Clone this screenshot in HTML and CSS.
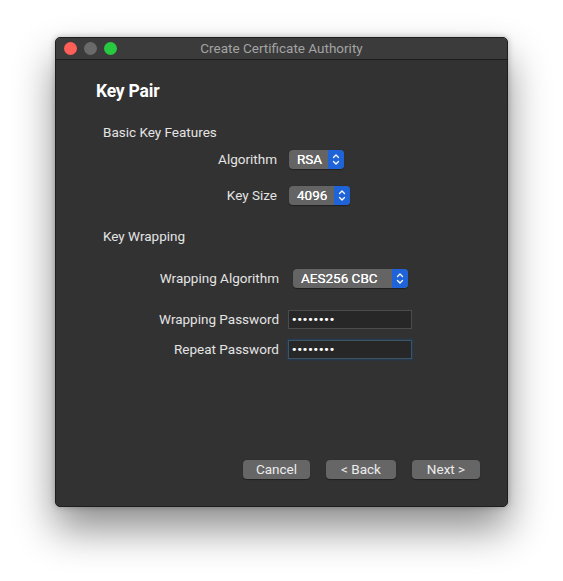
FILE: index.html
```html
<!DOCTYPE html>
<html>
<head>
<meta charset="utf-8">
<link rel="stylesheet" href="styles.css">
</head>
<body>
<div class="window">
  <div class="titlebar">
    <div class="lights">
      <span class="light red"></span>
      <span class="light gray"></span>
      <span class="light green"></span>
    </div>
    <div class="title">Create Certificate Authority</div>
  </div>
  <div class="content">
    <h1 class="heading">Key Pair</h1>
    <div class="section">Basic Key Features</div>
    <div class="row row-alg">
      <div class="label w-basic">Algorithm</div>
      <div class="popup p-rsa"><span class="ptext">RSA</span><span class="stepper"><svg width="16" height="19" viewBox="0 0 16 19"><path d="M5.5 7.5 L8 5 L10.5 7.5 M5.5 11.5 L8 14 L10.5 11.5" fill="none" stroke="#fff" stroke-width="1.3" stroke-linecap="round" stroke-linejoin="round"/></svg></span></div>
    </div>
    <div class="row row-size">
      <div class="label w-basic">Key Size</div>
      <div class="popup p-size"><span class="ptext">4096</span><span class="stepper"><svg width="16" height="19" viewBox="0 0 16 19"><path d="M5.5 7.5 L8 5 L10.5 7.5 M5.5 11.5 L8 14 L10.5 11.5" fill="none" stroke="#fff" stroke-width="1.3" stroke-linecap="round" stroke-linejoin="round"/></svg></span></div>
    </div>
    <div class="section sec2">Key Wrapping</div>
    <div class="row row-walg">
      <div class="label w-wrap">Wrapping Algorithm</div>
      <div class="popup p-aes"><span class="ptext">AES256 CBC</span><span class="stepper"><svg width="16" height="19" viewBox="0 0 16 19"><path d="M5.5 7.5 L8 5 L10.5 7.5 M5.5 11.5 L8 14 L10.5 11.5" fill="none" stroke="#fff" stroke-width="1.3" stroke-linecap="round" stroke-linejoin="round"/></svg></span></div>
    </div>
    <div class="row row-pw">
      <div class="label w-wrap">Wrapping Password</div>
      <div class="field">••••••••</div>
    </div>
    <div class="row row-rpw">
      <div class="label w-wrap">Repeat Password</div>
      <div class="field focused">••••••••</div>
    </div>
    <div class="spacer"></div>
    <div class="buttons">
      <div class="btn b-cancel">Cancel</div>
      <div class="btn b-back">&lt; Back</div>
      <div class="btn b-next">Next &gt;</div>
    </div>
  </div>
</div>
</body>
</html>
```
FILE: styles.css
```css
html, body {
  margin: 0;
  padding: 0;
  background: #ffffff;
}
body {
  width: 563px;
  height: 581px;
  overflow: hidden;
  font-family: Roboto, "Liberation Sans", sans-serif;
  font-size: 13.5px;
}
.window {
  margin: 37px 0 0 55px;
  width: 453px;
  height: 470px;
  box-sizing: border-box;
  background: #323232;
  border-radius: 5px;
  border: 1px solid #1e1e1e;
  box-shadow: 0 22px 40px rgba(0,0,0,0.45), 0 0 6px rgba(0,0,0,0.25);
  display: flex;
  flex-direction: column;
  overflow: hidden;
}
.titlebar {
  height: 21px;
  flex: none;
  background: #3b3b3b;
  border-bottom: 1px solid #1b1b1b;
  border-top: 1px solid #5a5a5a;
  border-radius: 5px 5px 0 0;
  display: flex;
  align-items: center;
  position: relative;
  box-sizing: content-box;
  margin-top: -1px;
}
.lights {
  display: flex;
  gap: 7px;
  padding-left: 7.5px;
}
.light {
  width: 13px;
  height: 13px;
  border-radius: 50%;
  display: block;
}
.red { background: #fe5f57; }
.gray { background: #6a6a6a; }
.green { background: #28c840; }
.title {
  position: absolute;
  left: 0;
  right: 0;
  text-align: center;
  color: #a3a3a3;
  font-size: 13.5px;
  line-height: 21px;
}
.content {
  flex: 1;
  display: flex;
  flex-direction: column;
  padding: 21px 27px 27px 40px;
  color: #e4e4e4;
}
.heading {
  margin: 0;
  font-size: 17.5px;
  font-weight: 700;
  line-height: 20px;
  color: #ffffff;
  letter-spacing: -0.2px;
}
.section {
  margin-top: 23px;
  margin-left: 7px;
  line-height: 16px;
  color: #e4e4e4;
}
.sec2 { margin-top: 23px; }
.row {
  display: flex;
  align-items: center;
  height: 20px;
}
.row-alg { margin-top: 9px; }
.row-size { margin-top: 16px; }
.row-walg { margin-top: 24px; }
.row-pw { margin-top: 21px; }
.row-rpw { margin-top: 10px; }
.label {
  text-align: right;
  color: #e4e4e4;
  flex: none;
}
.w-basic { width: 181px; margin-right: 12px; }
.w-wrap { width: 183px; }
.row-walg .label { margin-right: 14px; }
.row-pw .label, .row-rpw .label { margin-right: 9px; }
.popup {
  height: 19px;
  display: flex;
  align-items: stretch;
  background: #646464;
  border-radius: 4px;
  box-shadow: 0 0.5px 1px rgba(0,0,0,0.4);
  overflow: hidden;
}
.ptext {
  flex: 1;
  padding-left: 8px;
  line-height: 19px;
  color: #ffffff;
  font-weight: 400;
  text-shadow: 0 0 0.4px #fff;
}
.stepper {
  width: 16px;
  background: #1f63d8;
  display: flex;
}
.p-rsa { width: 55px; }
.p-size { width: 61px; }
.p-aes { width: 115px; }
.field {
  width: 124px;
  height: 19px;
  box-sizing: border-box;
  background: #272727;
  border: 1px solid #4c4c4c;
  color: #ffffff;
  font-family: "DejaVu Sans", sans-serif;
  font-size: 11px;
  line-height: 17px;
  padding-left: 2px;
  letter-spacing: -1.1px;
}
.field.focused {
  border-color: #3c5466;
  box-shadow: 0 0 0 1.5px #27394a;
}
.spacer { flex: 1; }
.buttons {
  display: flex;
  justify-content: flex-end;
  gap: 16px;
}
.btn {
  height: 19px;
  line-height: 19px;
  background: #666666;
  border-radius: 4px;
  color: #ececec;
  text-align: center;
  box-shadow: 0 0.5px 1px rgba(0,0,0,0.4);
}
.b-cancel { width: 67px; }
.b-back { width: 70px; }
.b-next { width: 68px; }
```
